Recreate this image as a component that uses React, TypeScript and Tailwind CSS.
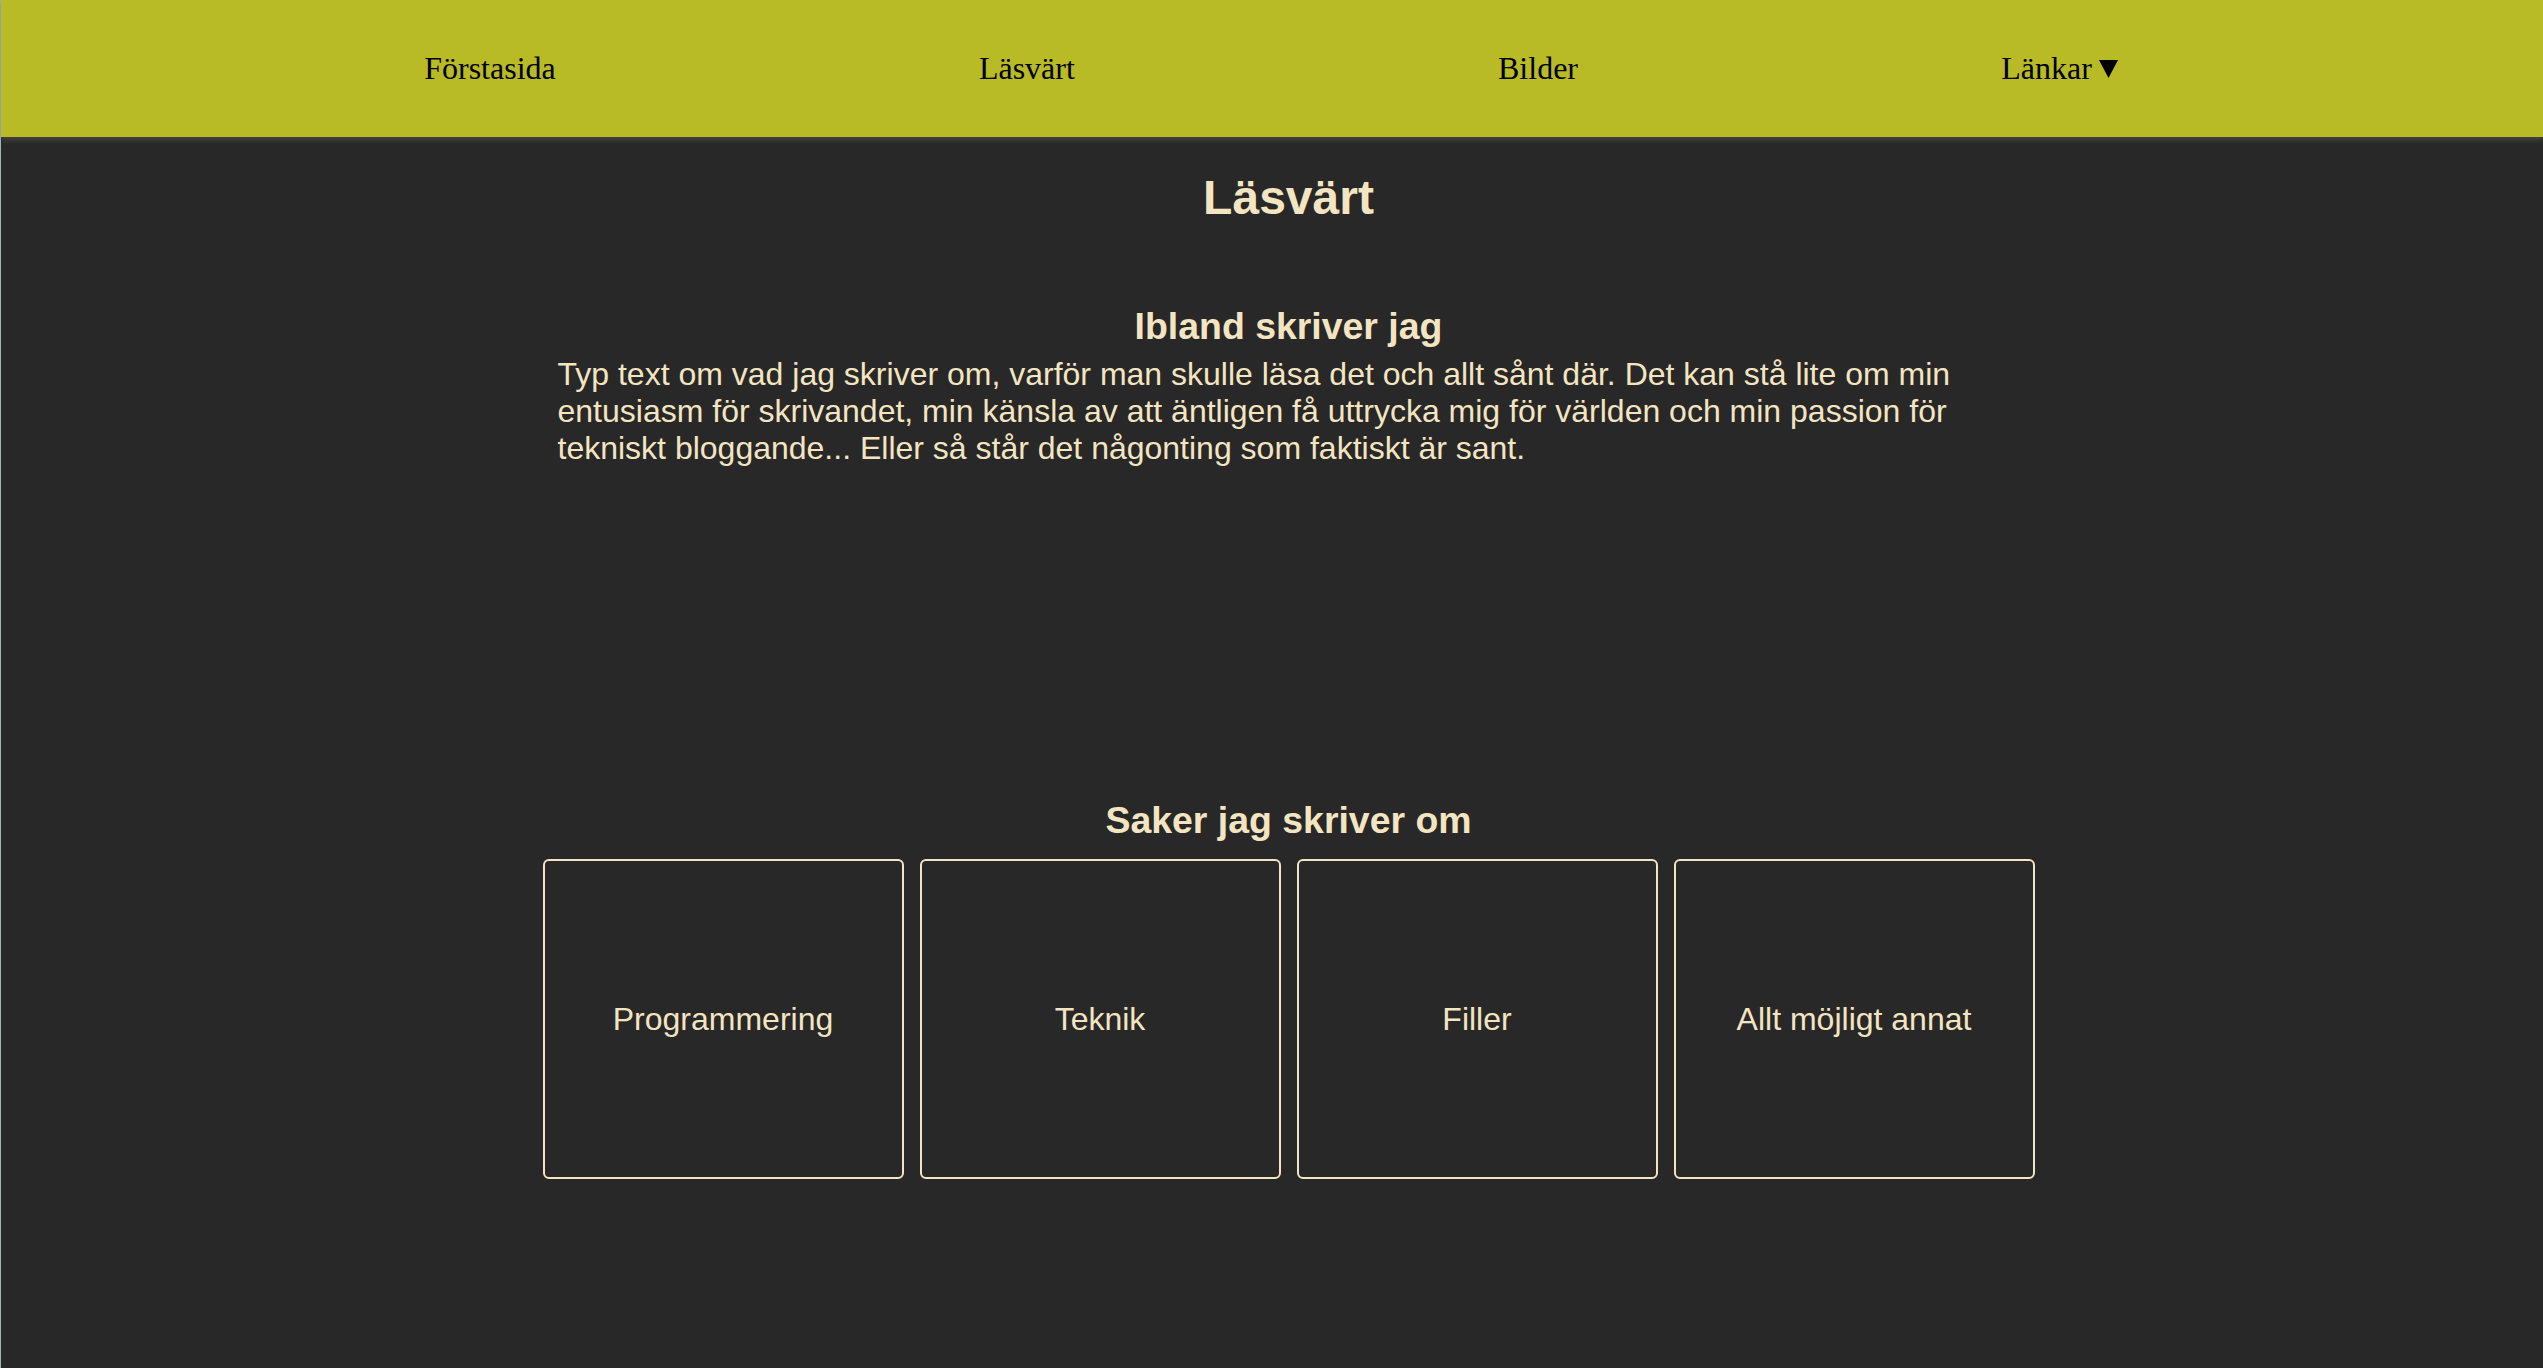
const navItems = ["Förstasida", "Läsvärt", "Bilder"];

const topics = ["Programmering", "Teknik", "Filler", "Allt möjligt annat"];

function Caret() {
  return (
    <svg
      className="ml-[7px] mt-[1px] inline-block h-[18px] w-[19px]"
      viewBox="0 0 19 18"
      aria-hidden="true"
    >
      <path d="M0 0H19L9.5 18Z" fill="#000" />
    </svg>
  );
}

export default function App() {
  return (
    <div className="min-h-screen border-l border-[#a9b2b6] bg-[#282828] pb-24 font-['Liberation_Sans',Arial,sans-serif] text-[#f4e5c2]">
      <nav className="relative z-10 flex h-[137px] items-center justify-evenly bg-[#b9bb26] pr-[2px] font-['Liberation_Serif','Times_New_Roman',serif] text-[32px] leading-[normal] text-black shadow-[0_2px_6px_rgba(110,105,100,0.6)]">
        {navItems.map((item) => (
          <a key={item} href="#" className="text-black no-underline">
            {item}
          </a>
        ))}
        <a href="#" className="flex items-center text-black no-underline">
          Länkar
          <Caret />
        </a>
      </nav>

      <main className="pl-[33px]">
        <h1 className="mt-[33px] text-center text-[48px] font-bold leading-[normal]">
          Läsvärt
        </h1>

        <div className="mx-auto w-[1492px]">
          <section className="mt-[80px] px-[15px]">
            <h3 className="text-center text-[37.44px] font-bold leading-[normal]">
              Ibland skriver jag
            </h3>
            <p className="mt-[8px] text-[32px] leading-[normal]">
              Typ text om vad jag skriver om, varför man skulle läsa det och allt sånt där. Det kan
              stå lite om min entusiasm för skrivandet, min känsla av att äntligen få uttrycka mig
              för världen och min passion för tekniskt bloggande... Eller så står det någonting som
              faktiskt är sant.
            </p>
          </section>

          <section className="mt-[332px]">
            <h3 className="text-center text-[37.44px] font-bold leading-[normal]">
              Saker jag skriver om
            </h3>
            <div className="mt-[17px] flex gap-4">
              {topics.map((topic) => (
                <div
                  key={topic}
                  className="flex h-[320px] w-[361px] items-center justify-center rounded-[6px] border-2 border-[#f4e5c2] text-[32px] leading-[normal]"
                >
                  {topic}
                </div>
              ))}
            </div>
          </section>
        </div>
      </main>
    </div>
  );
}
